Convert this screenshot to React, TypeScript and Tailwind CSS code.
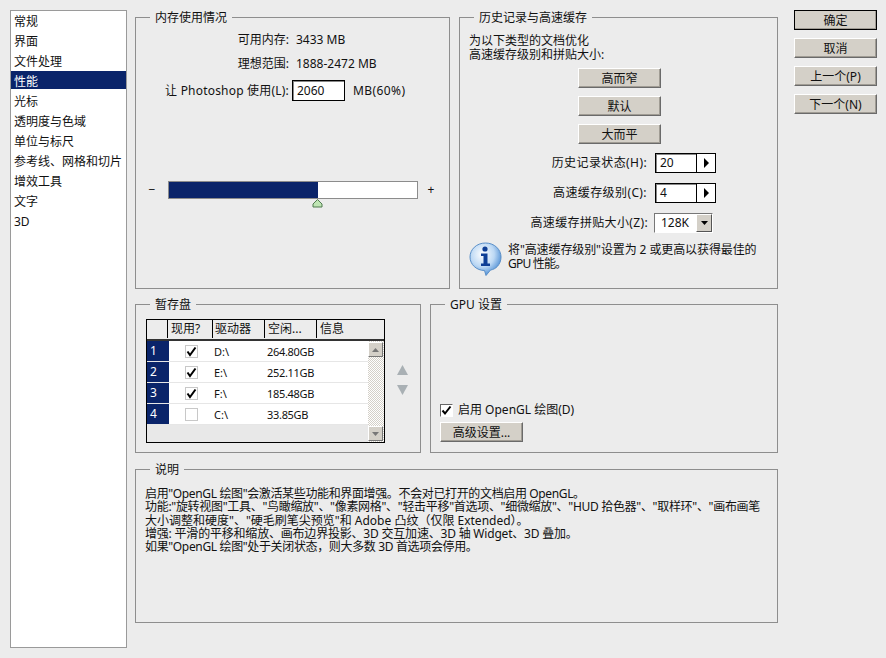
import React from "react";

const FONT = "font-['Noto_Sans','Noto_Sans_CJK_SC',sans-serif]";

function Panel({ title, className, children }: { title: string; className: string; children?: React.ReactNode }) {
  return (
    <div className={"relative border border-[#8e8e8e] " + className}>
      <div className="absolute -top-[8px] left-[14px] bg-[#ececec] px-[5px] leading-[16px] whitespace-nowrap">{title}</div>
      {children}
    </div>
  );
}

function Btn({ children, className = "" }: { children: React.ReactNode; className?: string }) {
  return (
    <div className={"flex h-[20px] w-[83px] items-center justify-center border border-t-white border-l-white border-r-[#6a6a6a] border-b-[#6a6a6a] bg-[#d4d0c8] pt-[2px] leading-none text-[#111] shadow-[inset_-1px_-1px_0_#a09c94] " + className}>
      {children}
    </div>
  );
}

function Check({ on }: { on: boolean }) {
  return (
    <div className="flex h-[13px] w-[13px] items-center justify-center border border-[#c8c8c8] bg-white">
      {on && (
        <svg width="11" height="11" viewBox="0 0 11 11">
          <path d="M1.5 5.5 L4 9 L9.5 1.5" fill="none" stroke="#000" strokeWidth="2" />
        </svg>
      )}
    </div>
  );
}

function Stepper({ value }: { value: string }) {
  return (
    <div className="flex h-[20px] w-[61px] border border-black bg-white shadow-[inset_1px_1px_0_#888]">
      <div className="flex w-[40px] items-center pl-[4px] leading-none">{value}</div>
      <div className="flex flex-1 items-center justify-center border-l border-black bg-white">
        <svg width="7" height="10" viewBox="0 0 7 10"><path d="M1 0 L6 5 L1 10 Z" fill="#000" /></svg>
      </div>
    </div>
  );
}

function InfoIcon() {
  return (
    <svg width="33" height="34" viewBox="0 0 33 34" className="shrink-0">
      <defs>
        <radialGradient id="ig" cx="0.4" cy="0.35" r="0.7">
          <stop offset="0" stopColor="#ffffff" />
          <stop offset="0.55" stopColor="#bcd8f4" />
          <stop offset="1" stopColor="#3f84d0" />
        </radialGradient>
      </defs>
      <path d="M16.5 1 C25.5 1 32 7.5 32 15 C32 22.5 26.5 27.5 21.5 28 L17 33.5 L15.5 28.5 C7.5 28.5 1 22.5 1 15 C1 7.5 7.5 1 16.5 1 Z" fill="url(#ig)" stroke="#5a8fc8" strokeWidth="1" />
      <circle cx="16" cy="7" r="2.6" fill="#0f3f96" />
      <path d="M12 11.5 H18.5 V21.5 H21 V24 H12 V21.5 H14.5 V14 H12 Z" fill="#0f3f96" />
    </svg>
  );
}

function ScrollBtn({ up }: { up: boolean }) {
  return (
    <div className="flex h-[15px] w-[15px] items-center justify-center border border-t-white border-l-white border-r-[#777] border-b-[#777] bg-[#d4d0c8]">
      <svg width="7" height="4" viewBox="0 0 7 4">
        <path d={up ? "M0 4 L3.5 0 L7 4 Z" : "M0 0 L3.5 4 L7 0 Z"} fill="#777" />
      </svg>
    </div>
  );
}

const drives = [
  { n: "1", on: true, d: "D:\\", s: "264.80GB" },
  { n: "2", on: true, d: "E:\\", s: "252.11GB" },
  { n: "3", on: true, d: "F:\\", s: "185.48GB" },
  { n: "4", on: false, d: "C:\\", s: "33.85GB" },
];

const nav = ["常规", "界面", "文件处理", "性能", "光标", "透明度与色域", "单位与标尺", "参考线、网格和切片", "增效工具", "文字", "3D"];

export default function App() {
  return (
    <div className={"flex h-[658px] w-[886px] items-start overflow-hidden bg-[#ececec] pl-[10px] pt-[10px] text-[12px] text-[#111] " + FONT}>
      <div className="h-[638px] w-[117px] shrink-0 border border-[#9a9a9a] bg-white">
        {nav.map((t, i) => (
          <div
            key={t}
            className={
              "flex items-center pl-[3px] leading-none whitespace-nowrap " +
              (i === 3 ? "mb-[2px] h-[18px] bg-[#0a246a] pt-[4px] text-white" : "h-[20px] pt-[2px]")
            }
          >
            {t}
          </div>
        ))}
      </div>

      <div className="ml-[8px] mt-[7px] flex w-[643px] shrink-0 flex-col gap-[15px]">
        <div className="flex gap-[9px]">
          <Panel title="内存使用情况" className="h-[272px] w-[315px] shrink-0">
            <div className="mt-[11px] flex h-[22px] items-center">
              <div className="w-[153px] text-right">可用内存:</div>
              <div className="ml-[7px]">3433 MB</div>
            </div>
            <div className="mt-[2px] flex h-[22px] items-center">
              <div className="w-[153px] text-right">理想范围:</div>
              <div className="ml-[7px]">1888-2472 MB</div>
            </div>
            <div className="mt-[5px] flex h-[21px] items-center">
              <div className="w-[153px] text-right tracking-[0.2px] whitespace-nowrap">让 Photoshop 使用(L):</div>
              <div className="ml-[3px] flex h-[21px] w-[53px] items-center border border-black bg-white pl-[4px] leading-none shadow-[inset_1px_1px_0_#888]">2060</div>
              <div className="ml-[8px] tracking-[0.4px]">MB(60%)</div>
            </div>
            <div className="mt-[80px] flex items-center">
              <div className="w-[32px] text-center leading-none">−</div>
              <div className="flex h-[18px] w-[250px] border border-[#8c8c8c] bg-white">
                <div className="h-full w-[149px] bg-[#0a246a]" />
              </div>
              <div className="w-[26px] text-center leading-none">+</div>
            </div>
            <svg width="11" height="9" viewBox="0 0 11 9" className="ml-[176px]">
              <path d="M5.5 0.5 L10 5 V8 H1 V5 Z" fill="#bfe5b4" stroke="#4f7a4f" />
            </svg>
          </Panel>

          <Panel title="历史记录与高速缓存" className="h-[272px] w-[319px] shrink-0">
            <div className="ml-[9px] mt-[16px] leading-[14px]">
              <div>为以下类型的文档优化</div>
              <div>高速缓存级别和拼贴大小:</div>
            </div>
            <div className="ml-[118px] mt-[6px] flex flex-col gap-[8px]">
              <Btn>高而窄</Btn>
              <Btn>默认</Btn>
              <Btn>大而平</Btn>
            </div>
            <div className="mt-[8px] flex h-[21px] items-center">
              <div className="w-[187px] text-right tracking-[0.4px]">历史记录状态(H):</div>
              <div className="ml-[8px]"><Stepper value="20" /></div>
            </div>
            <div className="mt-[9px] flex h-[21px] items-center">
              <div className="w-[187px] text-right tracking-[0.4px]">高速缓存级别(C):</div>
              <div className="ml-[8px]"><Stepper value="4" /></div>
            </div>
            <div className="mt-[9px] flex h-[21px] items-center">
              <div className="w-[188px] text-right tracking-[0.35px]">高速缓存拼贴大小(Z):</div>
              <div className="ml-[6px] flex h-[20px] w-[59px] items-center border border-t-[#777] border-l-[#777] border-r-white border-b-white bg-white pl-[6px] leading-none">
                <span className="flex-1">128K</span>
                <div className="flex h-[18px] w-[16px] items-center justify-center border border-t-white border-l-white border-r-[#555] border-b-[#555] bg-[#d4d0c8]">
                  <svg width="7" height="4" viewBox="0 0 7 4"><path d="M0 0 L3.5 4 L7 0 Z" fill="#000" /></svg>
                </div>
              </div>
            </div>
            <div className="ml-[9px] mt-[9px] flex items-start">
              <InfoIcon />
              <div className="ml-[6px] pt-[1px] leading-[14px] whitespace-nowrap">
                <div className="tracking-[-0.1px]">将"高速缓存级别"设置为 2 或更高以获得最佳的</div>
                <div className="tracking-[-0.8px]">GPU 性能。</div>
              </div>
            </div>
          </Panel>
        </div>

        <div className="flex gap-[9px]">
          <Panel title="暂存盘" className="h-[149px] w-[286px] shrink-0">
            <div className="flex">
              <div className="ml-[10px] mt-[14px] w-[239px] shrink-0 border border-black">
                <div className="flex h-[21px] border-b-2 border-[#333] bg-[#ececec] pb-[1px] leading-none">
                  <div className="w-[21px] border-r border-black" />
                  <div className="flex w-[45px] items-center border-r border-black pl-[3px]">现用?</div>
                  <div className="flex w-[52px] items-center border-r border-black pl-[2px]">驱动器</div>
                  <div className="flex w-[52px] items-center border-r border-black pl-[3px]">空闲...</div>
                  <div className="flex flex-1 items-center pl-[3px]">信息</div>
                </div>
                <div className="flex h-[101px]">
                  <div className="flex-1 bg-[#e8e8e8]">
                    {drives.map((r) => (
                      <div key={r.n} className="flex h-[21px] border-b border-[#e6e6e6] bg-white text-[11px] leading-none">
                        <div className="flex w-[22px] items-center bg-[#0a246a] pl-[3px] text-[12px] text-white">{r.n}</div>
                        <div className="flex w-[44px] items-center justify-center"><Check on={r.on} /></div>
                        <div className="flex w-[53px] items-center pl-[1px]">{r.d}</div>
                        <div className="flex flex-1 items-center pl-[1px] tracking-[-0.3px]">{r.s}</div>
                      </div>
                    ))}
                  </div>
                  <div className="flex w-[16px] flex-col justify-between bg-[repeating-conic-gradient(#d4d0c8_0_25%,#ffffff_0_50%)] bg-[length:2px_2px] py-[1px]">
                    <ScrollBtn up />
                    <ScrollBtn up={false} />
                  </div>
                </div>
              </div>
              <div className="ml-[12px] mt-[60px] flex flex-col gap-[10px]">
                <svg width="11" height="10" viewBox="0 0 11 10"><path d="M0 10 L5.5 0 L11 10 Z" fill="#a9b0b4" /></svg>
                <svg width="11" height="10" viewBox="0 0 11 10"><path d="M0 0 L5.5 10 L11 0 Z" fill="#a9b0b4" /></svg>
              </div>
            </div>
          </Panel>

          <Panel title="GPU 设置" className="h-[149px] w-[348px] shrink-0">
            <div className="ml-[9px] mt-[98px] flex h-[14px] items-center">
              <div className="flex h-[13px] w-[13px] items-center justify-center border border-t-[#666] border-l-[#666] border-r-white border-b-white bg-white">
                <svg width="11" height="11" viewBox="0 0 11 11"><path d="M1.5 5.5 L4 8.5 L9.5 1.5" fill="none" stroke="#000" strokeWidth="2" /></svg>
              </div>
              <span className="ml-[5px] whitespace-nowrap">启用 OpenGL 绘图(D)</span>
            </div>
            <Btn className="ml-[9px] mt-[5px]">高级设置...</Btn>
          </Panel>
        </div>

        <Panel title="说明" className="mt-[1px] h-[154px] w-[643px]">
          <div className="ml-[9px] mt-[17px] leading-[13.25px] whitespace-nowrap">
            <div className="tracking-[-0.36px]">启用"OpenGL 绘图"会激活某些功能和界面增强。不会对已打开的文档启用 OpenGL。</div>
            <div className="tracking-[-0.3px]">功能:"旋转视图"工具、"鸟瞰缩放"、"像素网格"、"轻击平移"首选项、"细微缩放"、"HUD 拾色器"、"取样环"、"画布画笔</div>
            <div>大小调整和硬度"、"硬毛刷笔尖预览"和 Adobe 凸纹（仅限 Extended）。</div>
            <div className="tracking-[-0.2px]">增强: 平滑的平移和缩放、画布边界投影、3D 交互加速、3D 轴 Widget、3D 叠加。</div>
            <div className="tracking-[-0.35px]">如果"OpenGL 绘图"处于关闭状态，则大多数 3D 首选项会停用。</div>
          </div>
        </Panel>
      </div>

      <div className="ml-[16px] flex flex-col gap-[8px]">
        <Btn className="!border-black">确定</Btn>
        <Btn>取消</Btn>
        <Btn>上一个(P)</Btn>
        <Btn>下一个(N)</Btn>
      </div>
    </div>
  );
}
